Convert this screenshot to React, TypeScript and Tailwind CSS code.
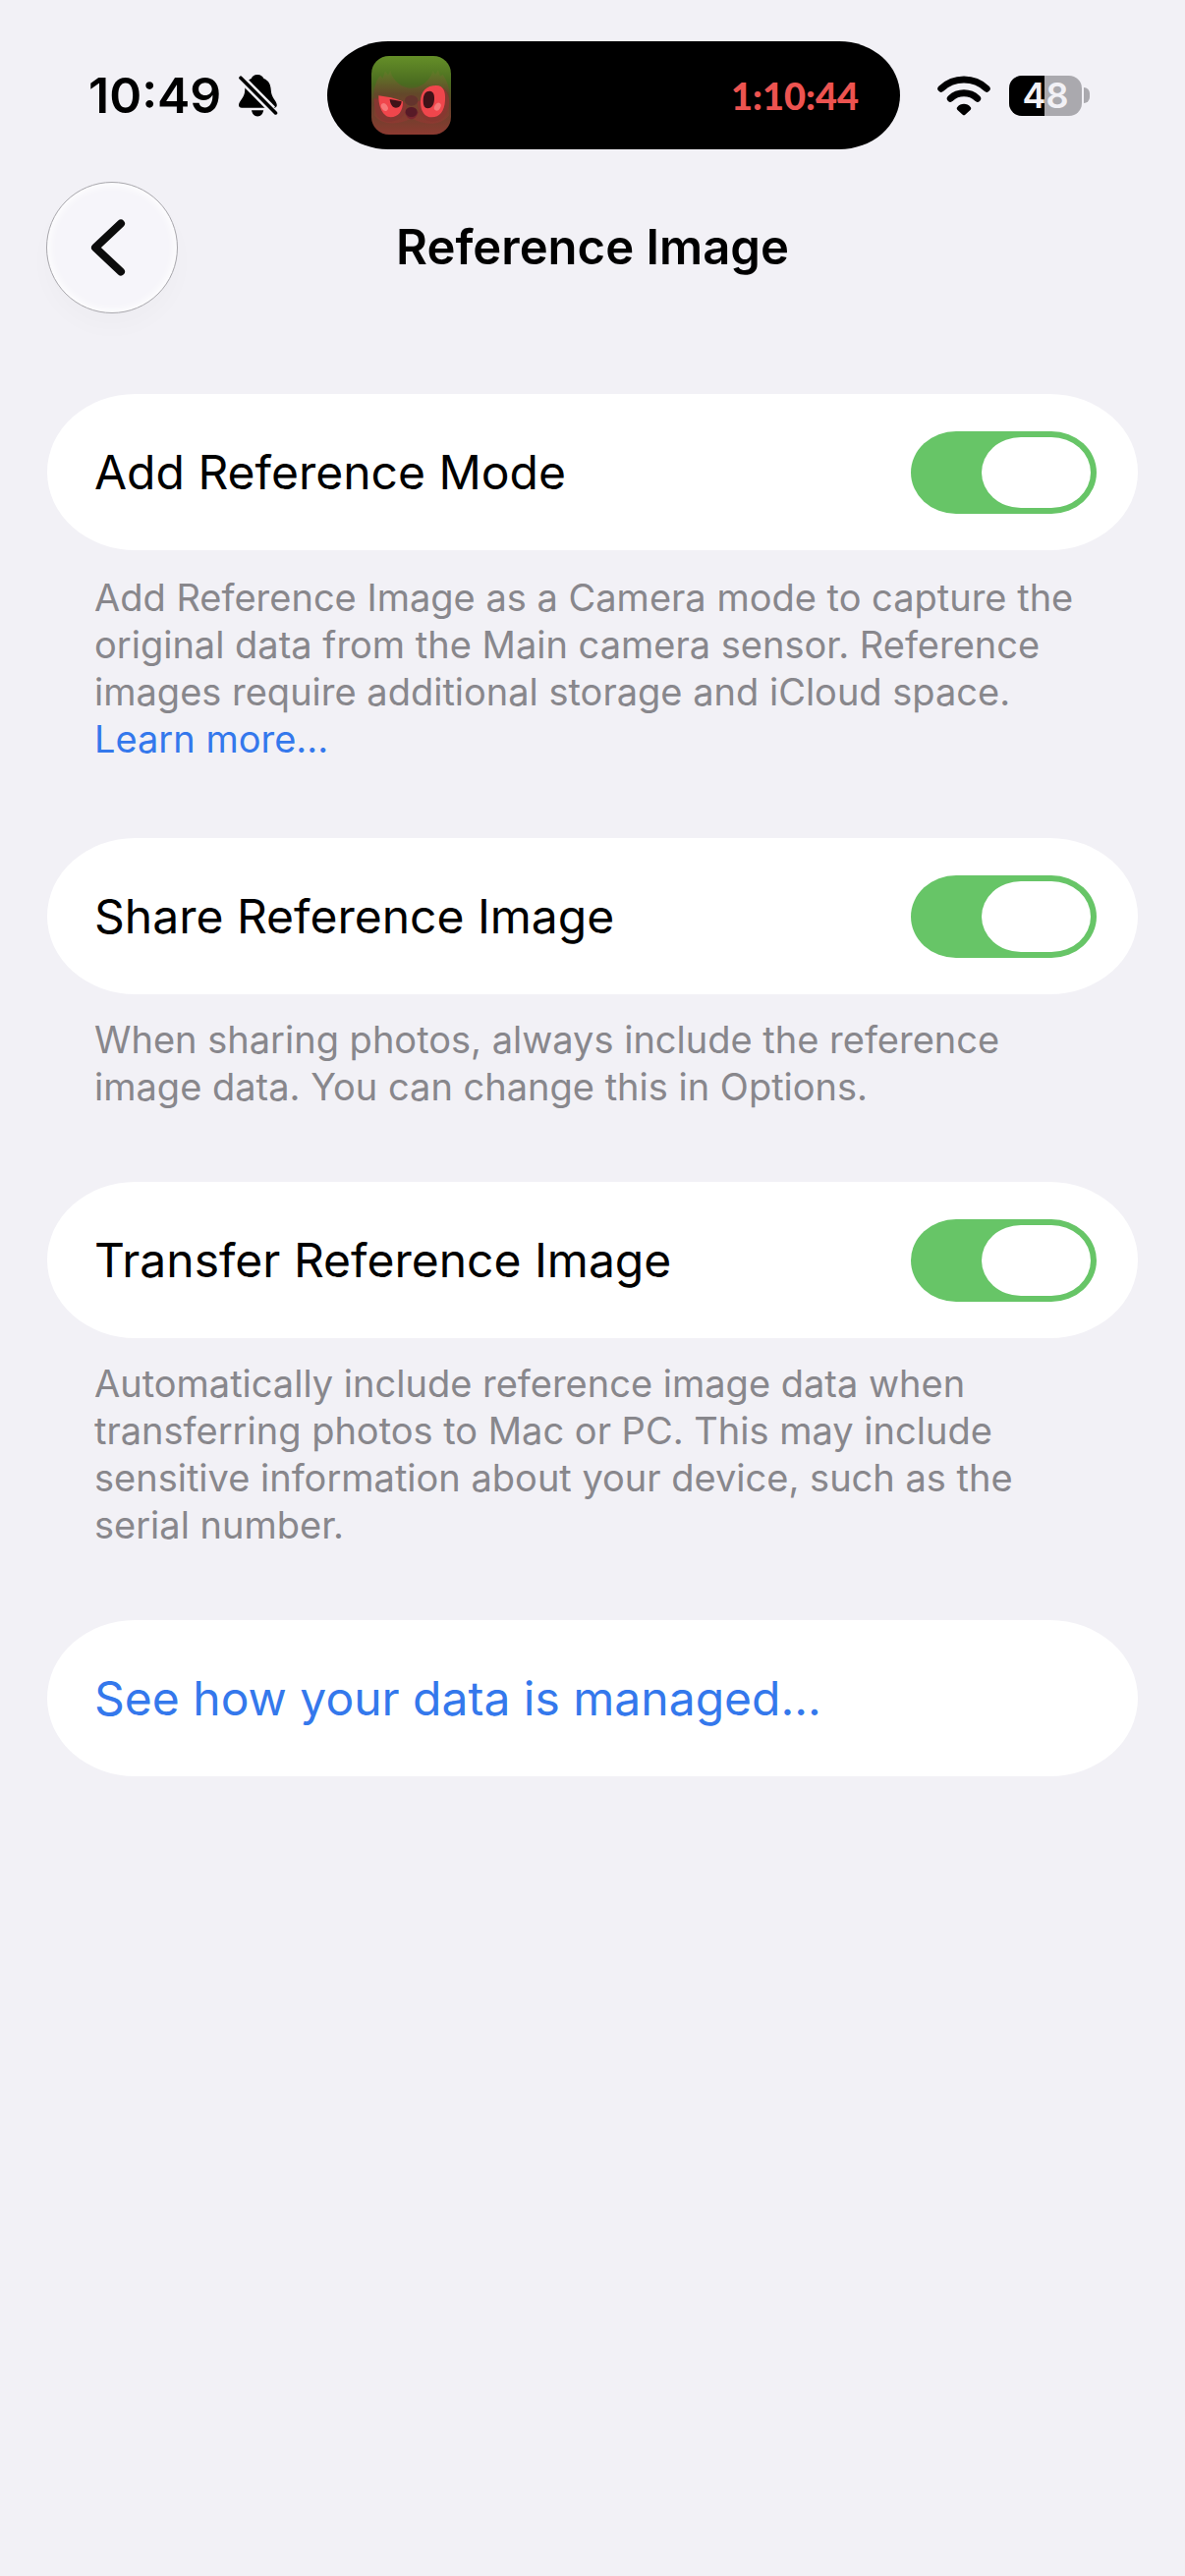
import React, { useId, useState } from 'react';

// --- Icons ---
function BellSlashIcon() {
  return (
    <svg viewBox="0 0 40 43" className="w-10 h-[43px]" aria-hidden="true">
      <path d="M19 0C22.5 0 24.500 2 25.500 4C30.500 6 32.500 10 32.800 16C33.200 24 38.500 26 38.800 31C38.800 33 37.500 33.700 36 33.700H3C1 33.700 0 32.500 0 31C0 26.500 6 24 6.200 16C6.500 10 8 6 12.700 4C13.500 2 15.500 0 19 0Z" />
      <path d="M13 36.200H25.200C24.500 40 22.300 42.400 19.100 42.400C16 42.400 13.700 40 13 36.200Z" />
      <path d="M-1 .2L34 35.400" className="stroke-[#f2f1f6]" strokeWidth="8.500" />
      <path d="M2 3.200L37.500 38.900" stroke="black" strokeWidth="3.600" strokeLinecap="round" />
    </svg>
  );
}

function WifiIcon() {
  return (
    <svg viewBox="0 0 54 41" className="w-[54px] h-[41px]" fill="none" aria-hidden="true">
      <path d="M3.800 13.200A34 34 0 0 1 50.200 13.200" stroke="black" strokeWidth="7" strokeLinecap="round" />
      <path d="M13.300 23.300A20 20 0 0 1 40.700 23.300" stroke="black" strokeWidth="7" strokeLinecap="round" />
      <path d="M20.300 32C23.500 27.700 30.500 27.700 33.700 32C34.600 33.200 34.400 34 33.500 34.900L28.300 39.800C27.500 40.500 26.500 40.500 25.700 39.800L20.500 34.900C19.600 34 19.400 33.200 20.300 32Z" fill="black" />
    </svg>
  );
}

function ChevronIcon() {
  return (
    <svg viewBox="0 0 36 60" className="w-9 h-[60px]" fill="none" aria-hidden="true">
      <path d="M31 5.500L5 30L31 54.500" stroke="#0c0c0c" strokeWidth="8" strokeLinecap="round" strokeLinejoin="round" />
    </svg>
  );
}

function OwlIcon() {
  return (
    <svg viewBox="0 0 243 240" className="w-[81px] h-20 rounded-[18px]" aria-hidden="true">
      <defs>
        <linearGradient id="owl-bg" x1="0" y1="0" x2="0" y2="1">
          <stop offset="0" stopColor="#658f28" />
          <stop offset=".35" stopColor="#4a6b20" />
          <stop offset=".6" stopColor="#60432a" />
          <stop offset="1" stopColor="#8c3a31" />
        </linearGradient>
        <linearGradient id="owl-face" x1="0" y1="0" x2="0" y2="1">
          <stop offset="0" stopColor="#5f8027" />
          <stop offset=".45" stopColor="#63482a" />
          <stop offset="1" stopColor="#8d3931" />
        </linearGradient>
      </defs>
      <rect width="243" height="240" fill="url(#owl-bg)" />
      <path d="M8 110C12 80 22 62 28 60L34 68L42 46L51 58L58 44C62 68 88 98 122 98C156 98 182 68 188 44L195 56L204 42L210 62L218 56C224 66 236 84 238 110V180C210 215 160 212 122 190C84 212 30 212 8 180Z" fill="url(#owl-face)" />
      <path d="M8 130C6 182 30 204 62 200C92 196 106 176 108 148L92 136Z" fill="#843731" />
      <path d="M140 140C144 196 190 218 222 184C244 160 242 116 220 98Z" fill="#873730" />
      <path d="M22 121C47 125 72 128 96 139C97 168 82 187 59 187C35 187 21 154 22 121Z" fill="#f0464c" />
      <path d="M56 132C68 134 80 136 92 139C91 151 85 158 75 158C64 158 57 146 56 132Z" fill="#401218" />
      <ellipse cx="40" cy="156" rx="9" ry="13" transform="rotate(-35 40 156)" fill="#f77879" />
      <path d="M150 140C150 108 168 90 198 90C220 90 227 108 225 136C223 169 208 187 185 187C162 187 150 168 150 140Z" fill="#f0464c" />
      <path d="M158 136C158 116 166 107 178 107C189 107 193 118 192 133C191 151 183 160 172 160C162 160 158 152 158 136Z" fill="#401218" />
      <ellipse cx="202" cy="155" rx="9" ry="13" transform="rotate(32 202 155)" fill="#f77879" />
      <path d="M102 170C108 200 136 200 143 170Z" fill="#79262f" />
      <ellipse cx="122" cy="136" rx="20" ry="16" fill="#64342d" />
      <path d="M104 168C108 152 136 152 140 168C140 192 104 192 104 168Z" fill="#571a27" />
    </svg>
  );
}

function Battery({ level }: { level: number }) {
  return (
    <div className="flex items-center gap-[2px]">
      <div className="relative w-[74px] h-[41px] rounded-[13px] bg-[#aaa9ae]">
        <div className="h-full rounded-l-[13px] bg-black" style={{ width: `${level}%` }} />
        <span className="absolute inset-0 flex items-center justify-center font-semibold text-[36px] leading-[41px] text-[#f2f1f6]">
          {level}
        </span>
      </div>
      <div className="w-[6px] h-4 rounded-r-full bg-[#aaa9ae]" />
    </div>
  );
}

// --- Status bar ---
function StatusBar() {
  return (
    <div className="grid grid-cols-[333px_1fr_290px] items-center pt-[42px]">
      <div className="flex items-center gap-[18px] pl-[90px]">
        <span className="font-semibold text-[50px] leading-[60px]">10:49</span>
        <BellSlashIcon />
      </div>
      <div className="flex items-center justify-between h-[110px] pl-[45px] pr-[42px] bg-black rounded-[62px/55px]">
        <OwlIcon />
        <span className="font-['Lato',sans-serif] font-black text-[38px] leading-[48px] text-[#ed5350]">1:10:44</span>
      </div>
      <div className="flex items-center gap-[19px] pl-[38px]">
        <WifiIcon />
        <Battery level={48} />
      </div>
    </div>
  );
}

// --- Settings rows ---
interface ToggleSectionProps {
  label: string;
  children: React.ReactNode;
  footerClassName?: string;
}

function ToggleSection({ label, children, footerClassName = 'pt-[22px]' }: ToggleSectionProps) {
  const id = useId();
  const [checked, setChecked] = useState(true);

  return (
    <section>
      <div className="flex items-center justify-between h-[159px] pl-12 pr-[42px] bg-white rounded-[90px/80px]">
        <label htmlFor={id} className="text-[48px] leading-[60px]">{label}</label>
        <input
          id={id}
          type="checkbox"
          role="switch"
          checked={checked}
          onChange={e => setChecked(e.target.checked)}
          className="appearance-none flex items-center w-[189px] h-[84px] p-[6px] rounded-[46px/42px] bg-[#d9d9dd] checked:bg-[#67c567] checked:justify-end before:block before:w-[111px] before:h-[72px] before:rounded-[40px/36px] before:bg-white"
        />
      </div>
      <p className={`px-12 text-[38px] leading-[48px] text-[#88878c] ${footerClassName}`}>{children}</p>
    </section>
  );
}

// --- Page ---
export default function App() {
  return (
    <div className="min-h-screen bg-[#f2f1f6] text-black font-['Inter',sans-serif]">
      <StatusBar />

      <header className="grid grid-cols-[134px_1fr_134px] items-center px-[47px] pt-[33px]">
        <button
          type="button"
          aria-label="Back"
          className="flex items-center justify-center size-[134px] pr-2 rounded-full border border-[#a9a8ad] bg-[#f6f5fa] shadow-[inset_0_0_8px_2px_#ffffff,0_14px_24px_rgba(0,0,0,0.02)]"
        >
          <ChevronIcon />
        </button>
        <h1 className="text-center font-semibold text-[49px] leading-[60px]">Reference Image</h1>
      </header>

      <main className="flex flex-col gap-[73px] px-12 pt-[82px]">
        <ToggleSection label="Add Reference Mode" footerClassName="pt-6 pb-1">
          Add Reference Image as a Camera mode to capture the original data from the Main camera sensor. Reference images require additional storage and iCloud space.{' '}
          <a href="#learn-more" className="text-[#3478ec] whitespace-nowrap">Learn more...</a>
        </ToggleSection>

        <ToggleSection label="Share Reference Image">
          When sharing photos, always include the reference image data. You can change this in Options.
        </ToggleSection>

        <ToggleSection label="Transfer Reference Image">
          Automatically include reference image data when transferring photos to Mac or PC. This may include sensitive information about your device, such as the serial number.
        </ToggleSection>

        <a
          href="#data-management"
          className="flex items-center h-[159px] px-12 bg-white rounded-[90px/80px] text-[48px] leading-[60px] text-[#3478ec]"
        >
          See how your data is managed...
        </a>
      </main>
    </div>
  );
}
